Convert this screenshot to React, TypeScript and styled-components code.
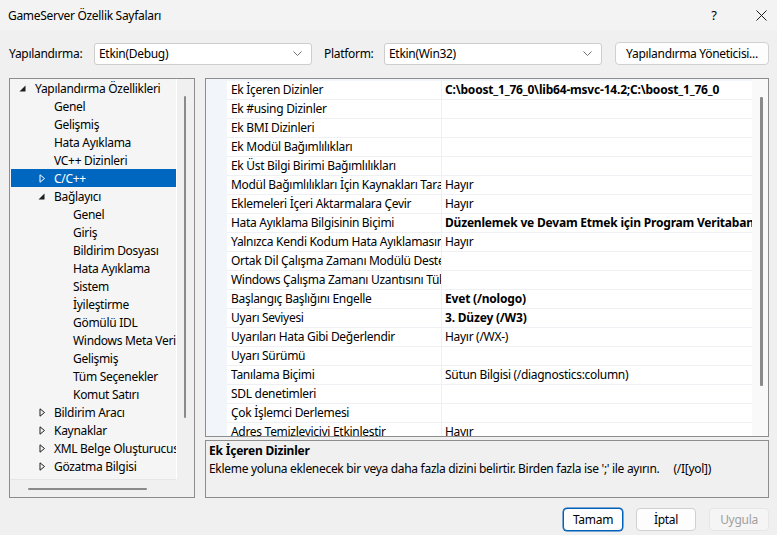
import React from 'react';
import styled, { createGlobalStyle } from 'styled-components';

const GlobalStyle = createGlobalStyle`
  html, body {
    margin: 0;
    padding: 0;
    background: #f0f0f0;
  }
  body {
    font-family: "Noto Sans", "Open Sans", sans-serif;
    font-size: 12px;
    letter-spacing: -0.3px;
    color: #000;
  }
`;

const Window = styled.div`
  width: 777px;
  height: 535px;
  display: flex;
  flex-direction: column;
  background: #f0f0f0;
  overflow: hidden;
`;

const TitleBar = styled.div`
  height: 30px;
  display: flex;
  align-items: center;
  gap: 27px;
  padding: 0 6px 0 8px;
  background: #f3f3f3;
`;

const Title = styled.div`
  flex: 1;
  font-size: 12px;
`;

const TitleButton = styled.div`
  width: 20px;
  height: 30px;
  display: flex;
  align-items: center;
  justify-content: center;
  font-size: 13px;
`;

const Toolbar = styled.div`
  display: flex;
  align-items: center;
  padding: 12px 0 13px 9px;
`;

const Label = styled.div<{ w: number }>`
  width: ${p => p.w}px;
  flex-shrink: 0;
`;

const Select = styled.div`
  width: 218px;
  height: 22px;
  box-sizing: border-box;
  border: 1px solid #cdcdcd;
  border-radius: 3px;
  background: #fff;
  display: flex;
  align-items: center;
  justify-content: space-between;
  padding: 0 9px 0 4px;
  flex-shrink: 0;
`;

const Spacer = styled.div<{ w: number }>`
  width: ${p => p.w}px;
  flex-shrink: 0;
`;

const Button = styled.div<{ w: number; focused?: boolean; disabled?: boolean }>`
  width: ${p => p.w}px;
  height: 23px;
  box-sizing: border-box;
  display: flex;
  align-items: center;
  justify-content: center;
  border-radius: 4px;
  flex-shrink: 0;
  background: ${p => (p.disabled ? '#f5f5f5' : '#fdfdfd')};
  color: ${p => (p.disabled ? '#a0a0a0' : '#000')};
  border: 1px solid ${p => (p.focused ? '#005fb8' : p.disabled ? '#e6e6e6' : '#d0d0d0')};
  box-shadow: ${p => (p.focused ? '0 0 0 0.5px #005fb8' : 'none')};
`;

const Main = styled.div`
  display: flex;
  gap: 10px;
  padding-left: 9px;
  height: 420px;
`;

const TreePanel = styled.div`
  width: 186px;
  box-sizing: border-box;
  border: 1px solid #8d8d8d;
  display: grid;
  grid-template-columns: 1fr 17px;
  grid-template-rows: 1fr 17px;
  background: #f0f0f0;
`;

const TreeView = styled.div`
  background: #f5f5f5;
  border-right: 1px solid #fff;
  border-bottom: 1px solid #e6e6e6;
  padding: 0 0 0 1px;
  overflow: hidden;
`;

const VScroll = styled.div<{ top: number; bottom: number }>`
  position: relative;
  background: #f0f0f0;
  &::after {
    content: '';
    position: absolute;
    left: 7px;
    width: 2px;
    top: ${p => p.top}px;
    bottom: ${p => p.bottom}px;
    border-radius: 1px;
    background: #8a8a8a;
  }
`;

const HScroll = styled.div`
  position: relative;
  &::after {
    content: '';
    position: absolute;
    left: 18px;
    width: 119px;
    top: 8px;
    height: 2px;
    border-radius: 1px;
    background: #8a8a8a;
  }
`;

const TreeRow = styled.div<{ level: number; selected?: boolean }>`
  height: 18px;
  display: flex;
  align-items: center;
  padding-left: ${p => 6 + p.level * 19}px;
  white-space: nowrap;
  background: ${p => (p.selected ? '#0067c0' : 'transparent')};
  color: ${p => (p.selected ? '#fff' : '#000')};
`;

const Arrow = styled.div`
  width: 18px;
  flex-shrink: 0;
  display: flex;
  align-items: center;
  padding-left: 2px;
  box-sizing: border-box;
`;

const RightColumn = styled.div`
  width: 564px;
  display: flex;
  flex-direction: column;
  gap: 3px;
`;

const Grid = styled.div`
  height: 359px;
  box-sizing: border-box;
  border: 1px solid #8d8d8d;
  display: flex;
  background: #fff;
`;

const GridBody = styled.div`
  flex: 1;
  overflow: hidden;
  padding-top: 2px;
  background: #f2f5fa;
`;

const GridScroll = styled(VScroll)`
  width: 16px;
  background: #f9f9f9;
  &::after {
    left: 8px;
    width: 3px;
  }
`;

const PropRow = styled.div`
  height: 19px;
  display: grid;
  grid-template-columns: 21px 214px 1fr;
`;

const Cell = styled.div<{ bold?: boolean; divider?: boolean }>`
  background: #fff;
  border-bottom: 1px solid #eef0f4;
  border-left: ${p => (p.divider ? '1px solid #eef0f4' : 'none')};
  padding-left: ${p => (p.divider ? '3px' : '4px')};
  line-height: 18px;
  white-space: nowrap;
  overflow: hidden;
  font-weight: ${p => (p.bold ? 700 : 400)};
  letter-spacing: ${p => (p.bold ? '-0.2px' : '-0.3px')};
`;

const Description = styled.div`
  flex: 1;
  box-sizing: border-box;
  border: 1px solid #8d8d8d;
  padding: 1px 3px;
  background: #f0f0f0;
`;

const DescTitle = styled.div`
  font-weight: 700;
  line-height: 18px;
  letter-spacing: -0.2px;
`;

const DescText = styled.div`
  line-height: 18px;
  white-space: pre;
`;

const Footer = styled.div`
  display: flex;
  justify-content: flex-end;
  gap: 13px;
  padding: 10px 8px 0 0;
`;

const Expanded = ({ color = '#1e1e1e' }: { color?: string }) => (
  <svg width="7" height="7" viewBox="0 0 7 7">
    <path d="M6.5 0.5 V6.5 H0.5 Z" fill={color} />
  </svg>
);

const Collapsed = ({ color = '#1e1e1e' }: { color?: string }) => (
  <svg width="7" height="9" viewBox="0 0 7 9" style={{ marginLeft: 1 }}>
    <path d="M1 0.8 L5.5 4.5 L1 8.2 Z" fill="none" stroke={color} strokeWidth="1" />
  </svg>
);

const Chevron = () => (
  <svg width="9" height="5" viewBox="0 0 9 5">
    <path d="M0.5 0.5 L4.5 4.5 L8.5 0.5" fill="none" stroke="#707070" strokeWidth="1" />
  </svg>
);

type TreeItem = { label: string; level: number; arrow?: 'open' | 'closed'; selected?: boolean };

const tree: TreeItem[] = [
  { label: 'Yapılandırma Özellikleri', level: 0, arrow: 'open' },
  { label: 'Genel', level: 1 },
  { label: 'Gelişmiş', level: 1 },
  { label: 'Hata Ayıklama', level: 1 },
  { label: 'VC++ Dizinleri', level: 1 },
  { label: 'C/C++', level: 1, arrow: 'closed', selected: true },
  { label: 'Bağlayıcı', level: 1, arrow: 'open' },
  { label: 'Genel', level: 2 },
  { label: 'Giriş', level: 2 },
  { label: 'Bildirim Dosyası', level: 2 },
  { label: 'Hata Ayıklama', level: 2 },
  { label: 'Sistem', level: 2 },
  { label: 'İyileştirme', level: 2 },
  { label: 'Gömülü IDL', level: 2 },
  { label: 'Windows Meta Veri', level: 2 },
  { label: 'Gelişmiş', level: 2 },
  { label: 'Tüm Seçenekler', level: 2 },
  { label: 'Komut Satırı', level: 2 },
  { label: 'Bildirim Aracı', level: 1, arrow: 'closed' },
  { label: 'Kaynaklar', level: 1, arrow: 'closed' },
  { label: 'XML Belge Oluşturucusu', level: 1, arrow: 'closed' },
  { label: 'Gözatma Bilgisi', level: 1, arrow: 'closed' },
];

type Prop = { name: string; value?: string; bold?: boolean };

const props: Prop[] = [
  { name: 'Ek İçeren Dizinler', value: 'C:\\boost_1_76_0\\lib64-msvc-14.2;C:\\boost_1_76_0', bold: true },
  { name: 'Ek #using Dizinler' },
  { name: 'Ek BMI Dizinleri' },
  { name: 'Ek Modül Bağımlılıkları' },
  { name: 'Ek Üst Bilgi Birimi Bağımlılıkları' },
  { name: 'Modül Bağımlılıkları İçin Kaynakları Tara', value: 'Hayır' },
  { name: 'Eklemeleri İçeri Aktarmalara Çevir', value: 'Hayır' },
  { name: 'Hata Ayıklama Bilgisinin Biçimi', value: 'Düzenlemek ve Devam Etmek için Program Veritabanı (/ZI)', bold: true },
  { name: 'Yalnızca Kendi Kodum Hata Ayıklamasını Destekle', value: 'Hayır' },
  { name: 'Ortak Dil Çalışma Zamanı Modülü Desteği' },
  { name: 'Windows Çalışma Zamanı Uzantısını Tüket' },
  { name: 'Başlangıç Başlığını Engelle', value: 'Evet (/nologo)', bold: true },
  { name: 'Uyarı Seviyesi', value: '3. Düzey (/W3)', bold: true },
  { name: 'Uyarıları Hata Gibi Değerlendir', value: 'Hayır (/WX-)' },
  { name: 'Uyarı Sürümü' },
  { name: 'Tanılama Biçimi', value: 'Sütun Bilgisi (/diagnostics:column)' },
  { name: 'SDL denetimleri' },
  { name: 'Çok İşlemci Derlemesi' },
  { name: 'Adres Temizleyiciyi Etkinleştir', value: 'Hayır' },
];

export default function App() {
  return (
    <Window>
      <GlobalStyle />
      <TitleBar>
        <Title>GameServer Özellik Sayfaları</Title>
        <TitleButton>?</TitleButton>
        <TitleButton>
          <svg width="11" height="11" viewBox="0 0 11 11">
            <path d="M0.5 0.5 L10.5 10.5 M10.5 0.5 L0.5 10.5" stroke="#1a1a1a" strokeWidth="1" />
          </svg>
        </TitleButton>
      </TitleBar>

      <Toolbar>
        <Label w={85}>Yapılandırma:</Label>
        <Select>
          <span>Etkin(Debug)</span>
          <Chevron />
        </Select>
        <Spacer w={12} />
        <Label w={60}>Platform:</Label>
        <Select>
          <span>Etkin(Win32)</span>
          <Chevron />
        </Select>
        <Spacer w={13} />
        <Button w={154}>Yapılandırma Yöneticisi...</Button>
      </Toolbar>

      <Main>
        <TreePanel>
          <TreeView>
            {tree.map((t, i) => (
              <TreeRow key={i} level={t.level} selected={t.selected}>
                <Arrow>
                  {t.arrow === 'open' && <Expanded />}
                  {t.arrow === 'closed' && <Collapsed color={t.selected ? '#fff' : '#1e1e1e'} />}
                </Arrow>
                {t.label}
              </TreeRow>
            ))}
          </TreeView>
          <VScroll top={17} bottom={62} />
          <HScroll />
          <div />
        </TreePanel>

        <RightColumn>
          <Grid>
            <GridBody>
              {props.map((p, i) => (
                <PropRow key={i}>
                  <div />
                  <Cell>{p.name}</Cell>
                  <Cell divider bold={p.bold}>{p.value ?? ''}</Cell>
                </PropRow>
              ))}
            </GridBody>
            <GridScroll top={18} bottom={50} />
          </Grid>
          <Description>
            <DescTitle>Ek İçeren Dizinler</DescTitle>
            <DescText>Ekleme yoluna eklenecek bir veya daha fazla dizini belirtir. Birden fazla ise ';' ile ayırın.     (/I[yol])</DescText>
          </Description>
        </RightColumn>
      </Main>

      <Footer>
        <Button w={60} focused>Tamam</Button>
        <Button w={60}>İptal</Button>
        <Button w={60} disabled>Uygula</Button>
      </Footer>
    </Window>
  );
}
